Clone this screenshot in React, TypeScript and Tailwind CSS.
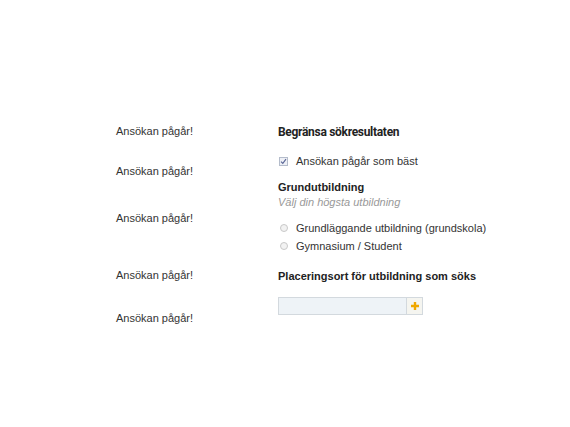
export default function App() {
  const left = ["mt-[124px]", "mt-[26px]", "mt-[33px]", "mt-[43px]", "mt-[29px]"];
  return (
    <div className="w-[570px] h-[427px] bg-white text-[#333] font-['Liberation_Sans',Arial,sans-serif] text-[11px] flex">
      <div className="w-[278px] pl-[116px] flex flex-col">
        {left.map((m, i) => (
          <div key={i} className={m + " leading-[14px]"}>
            Ansökan pågår!
          </div>
        ))}
      </div>
      <div className="flex flex-col pt-[124px]">
        <h2 className="text-[12px] font-bold leading-[16px] tracking-[-0.3px] text-[#222] font-['Roboto',sans-serif]">
          Begränsa sökresultaten
        </h2>
        <label className="flex items-center mt-[14px] leading-[14px]">
          <span className="w-[9px] h-[9px] ml-[1px] border border-[#b4bccb] bg-[#eef0f6] flex items-center justify-center">
            <svg width="7" height="7" viewBox="0 0 7 7">
              <path d="M1 3.6 L2.8 5.4 L6 1.2" stroke="#5a6696" strokeWidth="1.1" fill="none" />
            </svg>
          </span>
          <span className="ml-[8px]">Ansökan pågår som bäst</span>
        </label>
        <div className="mt-[12px] font-bold leading-[14px] text-[#222]">Grundutbildning</div>
        <div className="mt-[1px] italic text-[#999] leading-[14px]">Välj din högsta utbildning</div>
        <div className="mt-[12px] flex flex-col gap-[4px]">
          {["Grundläggande utbildning (grundskola)", "Gymnasium / Student"].map((t) => (
            <label key={t} className="flex items-center leading-[14px]">
              <span className="w-[8px] h-[8px] ml-[2px] rounded-full border border-[#c8c8c8] bg-[#f2f2f2]" />
              <span className="ml-[8px]">{t}</span>
            </label>
          ))}
        </div>
        <div className="mt-[16px] font-bold leading-[14px] text-[#222]">
          Placeringsort för utbildning som söks
        </div>
        <div className="mt-[14px] w-[145px] h-[18px] border border-[#d3d9de] bg-[#eef3f7] flex justify-end">
          <div className="w-[16px] h-[16px] border-l border-[#d3d9de] bg-[#f5f5f0] flex items-center justify-center">
            <svg width="10" height="10" viewBox="0 0 10 10">
              <path d="M5 1 V9 M1 5 H9" stroke="#f0a800" strokeWidth="2.4" />
            </svg>
          </div>
        </div>
      </div>
    </div>
  );
}
